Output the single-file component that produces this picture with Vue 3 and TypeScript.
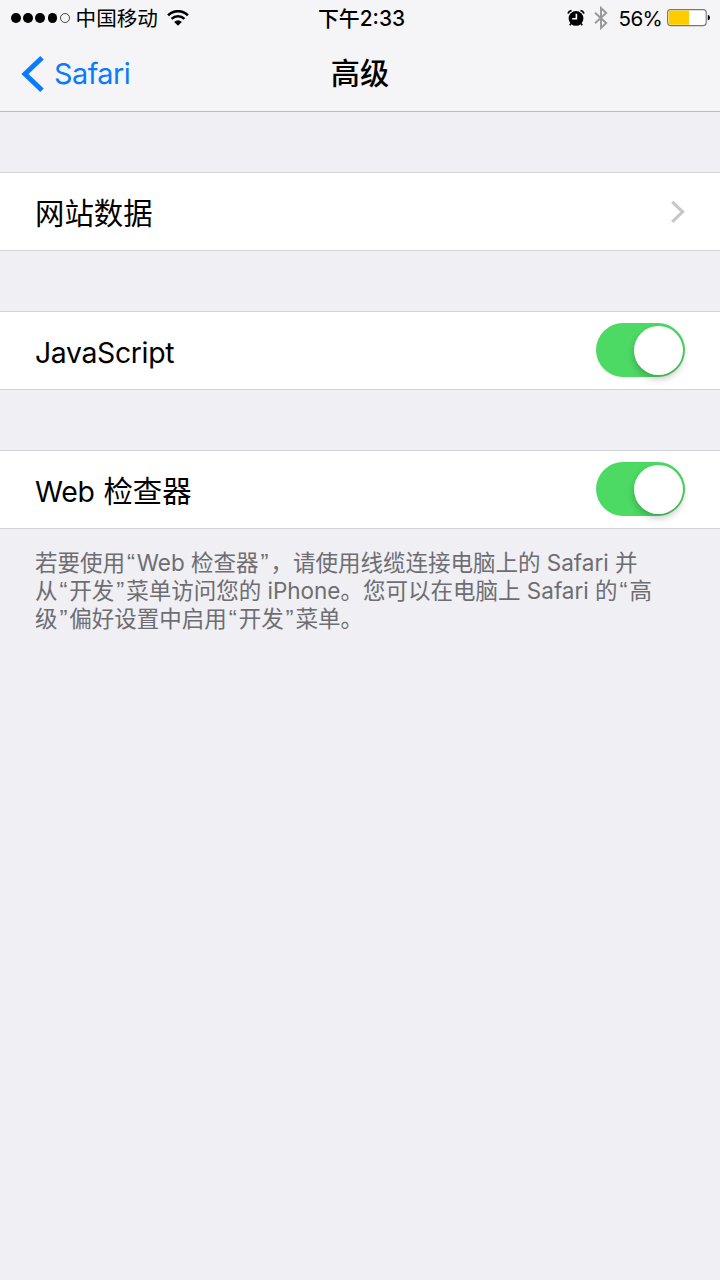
<script setup lang="ts">
import { ref } from 'vue'

interface Toggle {
  id: string
  latin: string
  han: string
  on: boolean
}

const toggles = ref<Toggle[]>([
  { id: 'js', latin: 'JavaScript', han: '', on: true },
  { id: 'inspector', latin: 'Web', han: '检查器', on: true },
])

const signal = [true, true, true, true, false]

// Each line is split around its curly quotes so they can have their own face and width.
const footer: string[][] = [
  '若要使用“Web 检查器”，请使用线缆连接电脑上的 Safari 并',
  '从“开发”菜单访问您的 iPhone。您可以在电脑上 Safari 的“高',
  '级”偏好设置中启用“开发”菜单。',
].map((line) => line.split(/([“”])/))

const isQuote = (s: string): boolean => s === '“' || s === '”'
</script>

<template>
  <div class="screen">
    <header class="header">
      <div class="status">
        <div class="status-left">
          <span class="dots">
            <i v-for="(full, n) in signal" :key="n" class="dot" :class="{ empty: !full }" />
          </span>
          <span class="carrier">中国移动</span>
          <svg class="wifi" width="22" height="16" viewBox="0 0 22 16">
            <path d="M1.1 5.3A14 14 0 0 1 20.9 5.3" />
            <path d="M4.6 8.9A9 9 0 0 1 17.4 8.9" />
            <path class="solid" d="M7.2 11.9A5.3 5.3 0 0 1 14.8 11.9L11 15.7Z" />
          </svg>
        </div>
        <div class="clock">下午2:33</div>
        <div class="status-right">
          <svg class="alarm" width="18" height="18" viewBox="0 0 18 18">
            <circle cx="9" cy="9.4" r="7.4" />
            <path class="bell" d="M1.2 4.6Q1.6 2 4.6 1.5M16.8 4.6Q16.4 2 13.4 1.5" />
            <path class="foot" d="M4 14.6L2.8 16.2M14 14.6L15.2 16.2" />
            <path class="hands" d="M9.4 4.8V9.8H5.2" />
          </svg>
          <svg class="bluetooth" width="14" height="24" viewBox="0 0 14 24">
            <path d="M1 6.8L12.2 17L7 22V2L12.2 7L1 17.2" />
          </svg>
          <span class="percent">56%</span>
          <svg class="battery" width="43" height="18" viewBox="0 0 43 18">
            <rect class="case" x="0.6" y="0.6" width="38.6" height="16" rx="3" />
            <path class="charge" d="M3.4 1.5H22V15.7H3.4Q1.5 15.7 1.5 13.8V3.4Q1.5 1.5 3.4 1.5Z" />
            <path class="tip" d="M40.8 5.8Q43 6.5 43 8.7T40.8 11.6Z" />
          </svg>
        </div>
      </div>
      <nav class="nav">
        <a class="back">
          <svg class="back-icon" width="23" height="36" viewBox="0 0 23 36">
            <path d="M21 1.8L4 18L21 34.2" />
          </svg>
          <span>Safari</span>
        </a>
        <h1 class="title">高级</h1>
      </nav>
    </header>

    <main>
      <section class="row">
        <span class="label han">网站数据</span>
        <svg class="chevron" width="16" height="24" viewBox="0 0 16 24">
          <path d="M3.2 1.8L13.6 11.8L3.2 21.8" />
        </svg>
      </section>
      <section v-for="t in toggles" :key="t.id" class="row">
        <span class="label">{{ t.latin }}<span v-if="t.han" class="han han-tail">{{ t.han }}</span></span>
        <button
          class="switch"
          :class="{ on: t.on }"
          role="switch"
          :aria-checked="t.on"
          :aria-label="t.latin"
          @click="t.on = !t.on"
        >
          <span class="knob" />
        </button>
      </section>
      <p class="note">
        <span v-for="(line, n) in footer" :key="n" class="line"><span
          v-for="(part, m) in line"
          :key="m"
          :class="{ quote: isQuote(part) }"
        >{{ part }}</span></span>
      </p>
    </main>
  </div>
</template>

<style>
body {
  background: #efeff4;
}
</style>

<style scoped>
.screen {
  width: 720px;
  height: 1280px;
  overflow: hidden;
  background: #efeff4;
  color: #000;
  font-family: Inter, 'Noto Sans CJK SC', sans-serif;
}
.header {
  box-sizing: border-box;
  height: 112px;
  background: #f5f5f7;
  border-bottom: 1px solid #bbbbc0;
}
.status {
  display: grid;
  grid-template-columns: 1fr auto 1fr;
  align-items: center;
  height: 36px;
  padding: 0 10px 0 11px;
  font-size: 20.6px;
  line-height: 36px;
}
.status-left,
.status-right {
  display: flex;
  align-items: center;
}
.status-right {
  justify-content: flex-end;
}
.dots {
  display: flex;
  gap: 2.4px;
}
.dot {
  box-sizing: border-box;
  width: 9.8px;
  height: 9.8px;
  border-radius: 50%;
  background: #000;
}
.dot.empty {
  background: none;
  border: 1px solid #444;
}
.carrier {
  margin-left: 6px;
  padding-top: 2px;
  line-height: 34px;
}
.wifi {
  margin: -1px 0 0 9px;
}
.wifi path {
  fill: none;
  stroke: #000;
  stroke-width: 2.6;
}
.wifi .solid {
  fill: #000;
  stroke: none;
}
.clock {
  padding: 2px 0 0 2px;
  font-size: 20.9px;
  font-weight: 500;
  line-height: 34px;
}
.alarm circle {
  fill: #000;
}
.alarm path {
  fill: none;
  stroke: #000;
  stroke-width: 1.7;
}
.alarm .hands {
  stroke: #fff;
  stroke-width: 1.6;
}
.bluetooth {
  margin-left: 9px;
}
.bluetooth path {
  fill: none;
  stroke: #97979a;
  stroke-width: 1.9;
}
.percent {
  margin-left: 11px;
  padding-top: 2px;
  line-height: 34px;
  letter-spacing: -0.7px;
}
.battery {
  margin-left: 5px;
}
.case {
  fill: #fff;
  stroke: #77777a;
  stroke-width: 1.1;
}
.charge {
  fill: #fc0;
}
.nav {
  display: grid;
  grid-template-columns: 1fr auto 1fr;
  align-items: center;
  height: 75px;
  padding: 0 21px;
}
.back {
  display: flex;
  align-items: center;
  color: #087cfb;
  font-size: 28.8px;
  letter-spacing: -0.5px;
}
.back span {
  margin-left: 10px;
}
.back-icon path {
  fill: none;
  stroke: #087cfb;
  stroke-width: 5;
}
.title {
  margin: 0 0 5px;
  font-size: 29.2px;
  font-weight: 500;
}
.row {
  box-sizing: border-box;
  display: flex;
  align-items: center;
  justify-content: space-between;
  height: 79px;
  margin-top: 60px;
  padding: 0 35px;
  background: #fff;
  border: solid #d3d3d8;
  border-width: 1px 0;
}
.label {
  margin-top: 4px;
  font-size: 28.4px;
  line-height: 40px;
  letter-spacing: -0.35px;
}
.han {
  font-size: 29.4px;
  letter-spacing: 0;
}
.han-tail {
  margin-left: 9px;
}
.chevron path {
  fill: none;
  stroke: #c7c7cc;
  stroke-width: 3.2;
}
.switch {
  display: flex;
  width: 89px;
  height: 54px;
  margin-bottom: 1px;
  padding: 2.5px;
  border: 0;
  border-radius: 27px;
  background: #e5e5ea;
}
.switch.on {
  justify-content: flex-end;
  background: #4cd964;
}
.knob {
  width: 49px;
  height: 49px;
  border-radius: 50%;
  background: #fff;
  box-shadow: 0 4px 7px rgba(0, 0, 0, 0.22);
}
.note {
  margin: 20px 35px 0;
  color: #6d6d72;
  font-size: 22.5px;
  line-height: 28px;
}
.line {
  display: block;
  height: 28px;
  white-space: pre;
}
.quote {
  display: inline-block;
  width: 11.8px;
  font-family: 'Liberation Sans', sans-serif;
  font-size: 24px;
  line-height: 20px;
  text-align: center;
}
</style>
